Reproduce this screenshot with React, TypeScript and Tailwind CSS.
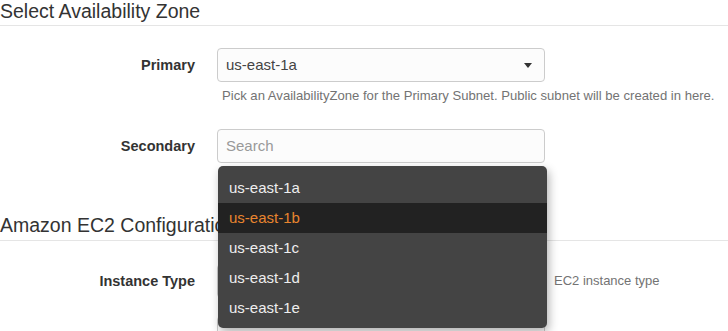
const zones = ['us-east-1a', 'us-east-1b', 'us-east-1c', 'us-east-1d', 'us-east-1e']

function FormRow({ label, children }: { label?: string; children: React.ReactNode }) {
  return (
    <div className="flex items-start">
      <label className="w-[195px] shrink-0 text-right text-[14.5px] font-bold leading-[34px] text-[#333]">
        {label}
      </label>
      <div className="ml-[22px]">{children}</div>
    </div>
  )
}

export default function App() {
  const active = 'us-east-1b'

  return (
    <div
      className="relative h-[331px] w-[728px] overflow-hidden bg-white"
      style={{ fontFamily: '"Liberation Sans", Arial, sans-serif' }}
    >
      <h3 className="border-b border-[#e5e5e5] pb-[3px] text-[19.5px] leading-[22px] text-[#333]">
        Select Availability Zone
      </h3>

      <div className="mt-[22px]">
        <FormRow label="Primary">
          <div className="flex h-[34px] w-[328px] items-center justify-between rounded-[4px] border border-[#ccc] bg-[#fcfcfc] pl-[8px] pr-[12px] text-[15px] text-[#444]">
            <span>us-east-1a</span>
            <span className="border-x-[4px] border-t-[5px] border-x-transparent border-t-[#333]" />
          </div>
          <p className="mt-[5px] whitespace-nowrap pl-[5px] text-[13.1px] leading-[18px] text-[#737373]">
            Pick an AvailabilityZone for the Primary Subnet. Public subnet will be created in here.
          </p>
        </FormRow>
      </div>

      <div className="relative z-10 mt-[24px]">
        <FormRow label="Secondary">
          <div className="relative">
            <div className="flex h-[34px] w-[328px] items-center rounded-[4px] border border-[#ccc] bg-[#fcfcfc] pl-[8px] text-[15px] text-[#999]">
              Search
            </div>
            <ul className="absolute left-[1px] top-[calc(100%+3px)] w-[329px] rounded-[5px] bg-[#444] pb-[5px] pt-[7px] shadow-[2px_4px_10px_rgba(0,0,0,0.3)]">
              {zones.map((z) => (
                <li
                  key={z}
                  className={
                    z === active
                      ? 'h-[30px] bg-[#222] pl-[11px] text-[15px] leading-[30px] text-[#e8852f]'
                      : 'h-[30px] pl-[11px] text-[15px] leading-[30px] text-[#eee]'
                  }
                >
                  {z}
                </li>
              ))}
            </ul>
          </div>
        </FormRow>
      </div>

      <h3 className="mt-[51px] border-b border-[#e5e5e5] pb-[4px] text-[19.5px] leading-[22px] text-[#333]">
        Amazon EC2 Configuration
      </h3>

      <div className="mt-[23px]">
        <FormRow label="Instance Type">
          <div className="flex items-center">
            <div className="h-[34px] w-[328px] rounded-[4px] border border-[#ccc] bg-[#fcfcfc]" />
            <span className="ml-[9px] text-[13px] leading-[34px] text-[#737373]">EC2 instance type</span>
          </div>
        </FormRow>
      </div>

      <div className="mt-[18px]">
        <FormRow>
          <div className="h-[34px] w-[328px] rounded-[4px] border border-[#ccc] bg-[#fcfcfc]" />
        </FormRow>
      </div>
    </div>
  )
}
